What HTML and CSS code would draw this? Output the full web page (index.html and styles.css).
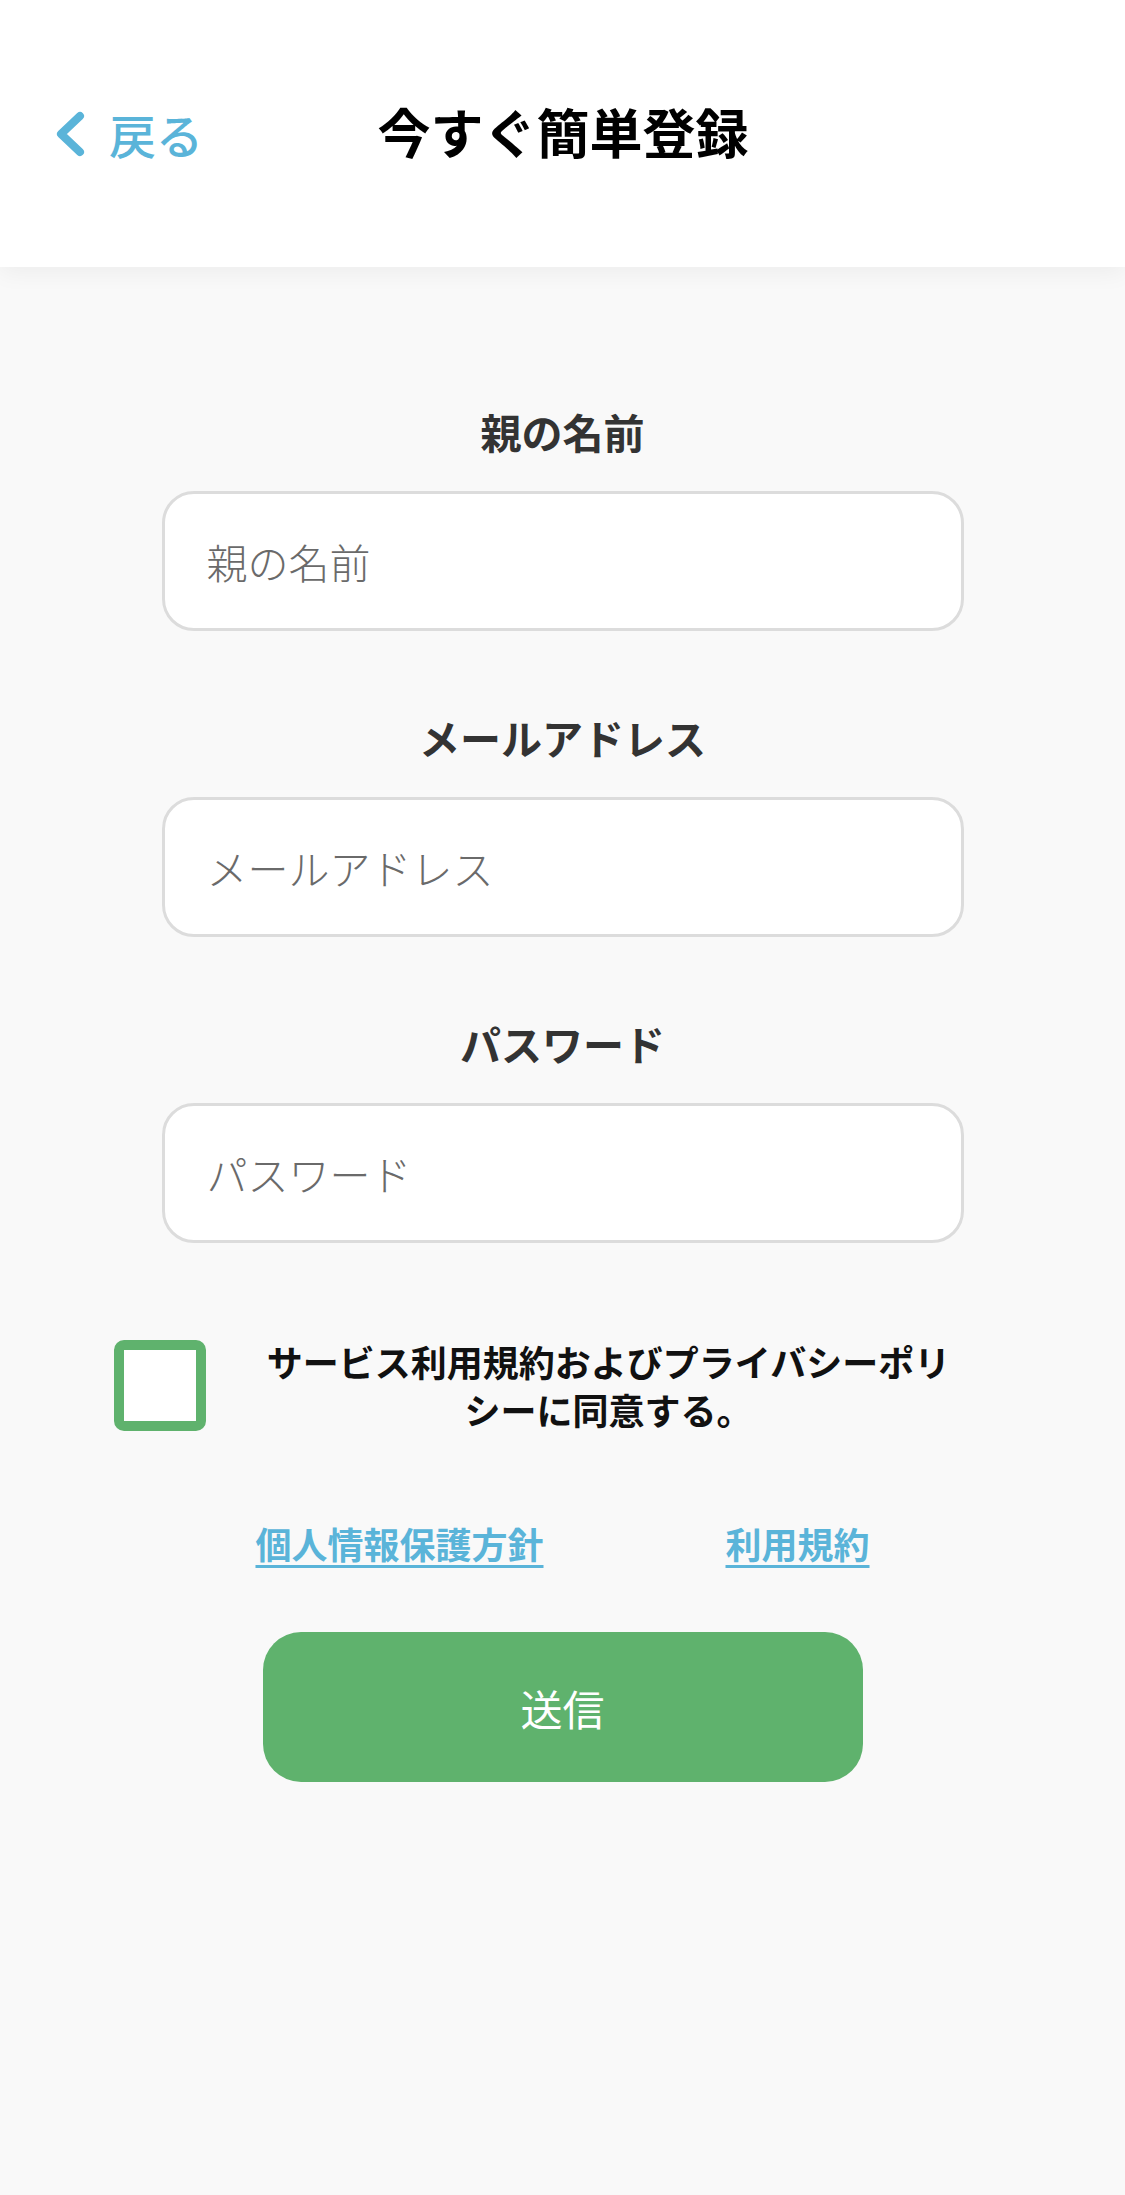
FILE: index.html
```html
<!DOCTYPE html>
<html lang="ja">
<head>
<meta charset="utf-8">
<title>今すぐ簡単登録</title>
<link rel="stylesheet" href="styles.css">
</head>
<body>
<header class="topbar">
  <a class="back" href="#">
    <svg class="back-icon" width="30" height="46" viewBox="0 0 30 46" aria-hidden="true">
      <polyline points="25,5 6,23 25,41" fill="none" stroke="#5ab4d9" stroke-width="8" stroke-linecap="round" stroke-linejoin="round"/>
    </svg>
    <span class="back-text">戻る</span>
  </a>
  <h1 class="title">今すぐ簡単登録</h1>
  <div class="spacer"></div>
</header>

<main class="content">
  <form class="form">
    <div class="field">
      <label class="label" for="name">親の名前</label>
      <input class="input" id="name" type="text" placeholder="親の名前">
    </div>
    <div class="field">
      <label class="label" for="mail">メールアドレス</label>
      <input class="input" id="mail" type="text" placeholder="メールアドレス">
    </div>
    <div class="field">
      <label class="label" for="pw">パスワード</label>
      <input class="input" id="pw" type="password" placeholder="パスワード">
    </div>
  </form>

  <div class="agree">
    <input class="checkbox" type="checkbox" id="agree">
    <label class="agree-text" for="agree">サービス利用規約およびプライバシーポリシーに同意する。</label>
  </div>

  <nav class="links">
    <a class="link" href="#">個人情報保護方針</a>
    <a class="link" href="#">利用規約</a>
  </nav>

  <div class="actions">
    <button class="submit" type="button">送信</button>
  </div>
</main>
</body>
</html>
```

FILE: styles.css
```css
* {
  box-sizing: border-box;
}

html, body {
  margin: 0;
  padding: 0;
}

body {
  width: 1125px;
  min-height: 2195px;
  background: #f9f9f9;
  font-family: "Noto Sans CJK JP", "Noto Sans", sans-serif;
  color: #111;
}

.topbar {
  height: 267px;
  background: #ffffff;
  box-shadow: 0 6px 22px rgba(0, 0, 0, 0.05);
  display: grid;
  grid-template-columns: 1fr auto 1fr;
  align-items: center;
  padding: 0 0 0 55px;
  position: relative;
  z-index: 1;
}

.back {
  display: flex;
  align-items: center;
  gap: 24px;
  text-decoration: none;
  color: #5ab4d9;
  justify-self: start;
}

.back-icon {
  display: block;
}

.back-text {
  font-size: 47px;
  font-weight: 500;
  line-height: 60px;
}

.title {
  margin: 0 0 6px;
  font-size: 53px;
  font-weight: 700;
  line-height: 80px;
  color: #000;
  transform: translateX(-27px);
}

.content {
  padding-top: 134px;
}

.form {
  width: 802px;
  margin: 0 auto;
  display: flex;
  flex-direction: column;
  gap: 76px;
}

.field {
  display: flex;
  flex-direction: column;
  align-items: center;
}

.label {
  font-size: 41px;
  font-weight: 700;
  line-height: 60px;
  color: #333;
  margin-bottom: 30px;
}

.input {
  width: 100%;
  height: 140px;
  border: 3px solid #dcdcdc;
  border-radius: 32px;
  background: #ffffff;
  padding: 0 42px;
  font-family: inherit;
  font-size: 41px;
  font-weight: 300;
  color: #333;
  outline: none;
}

.input::placeholder {
  color: #6a6a6a;
  font-weight: 300;
}

.agree {
  display: flex;
  align-items: center;
  padding: 0 114px;
  margin-top: 94px;
}

.checkbox {
  appearance: none;
  -webkit-appearance: none;
  margin: 0;
  flex: 0 0 auto;
  width: 92px;
  height: 91px;
  border: 10px solid #5fb26d;
  border-radius: 10px;
  background: #ffffff;
}

.agree-text {
  flex: 1;
  padding: 0 50px;
  text-align: center;
  font-size: 36px;
  font-weight: 700;
  line-height: 48px;
  color: #111;
}

.links {
  display: flex;
  justify-content: center;
  gap: 182px;
  margin-top: 86px;
}

.link {
  font-size: 36px;
  font-weight: 700;
  line-height: 48px;
  color: #5ab4d9;
  text-decoration: underline;
  text-decoration-thickness: 3px;
  text-underline-offset: 6px;
}

.actions {
  display: flex;
  justify-content: center;
  margin-top: 65px;
}

.submit {
  width: 600px;
  height: 150px;
  border: none;
  border-radius: 38px;
  background: #5fb26d;
  color: #ffffff;
  font-family: inherit;
  font-size: 42px;
  font-weight: 400;
}
```
